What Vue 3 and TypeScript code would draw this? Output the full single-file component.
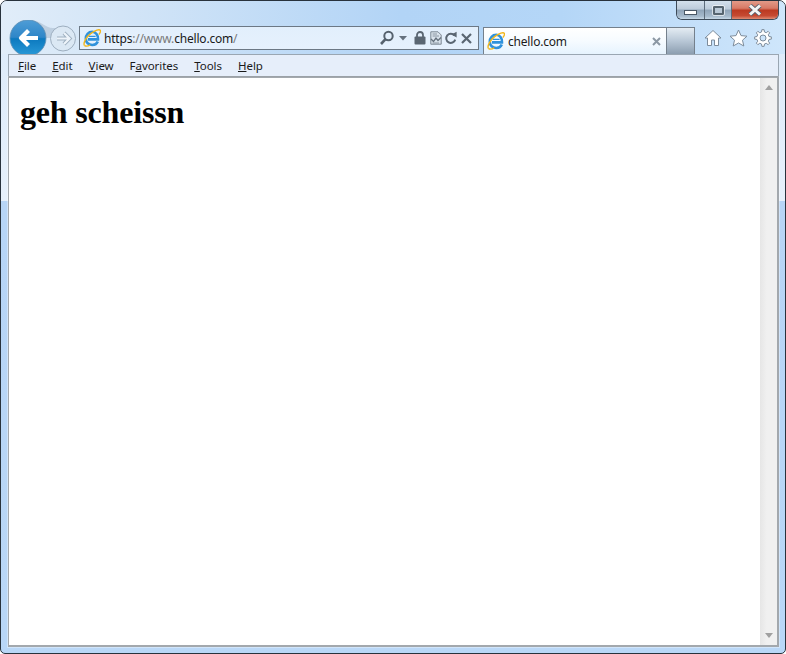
<script setup lang="ts">
interface MenuItem { key: string; rest: string; pre?: string }
const menus: MenuItem[] = [
  { key: 'F', rest: 'ile' },
  { key: 'E', rest: 'dit' },
  { key: 'V', rest: 'iew' },
  { pre: 'F', key: 'a', rest: 'vorites' },
  { key: 'T', rest: 'ools' },
  { key: 'H', rest: 'elp' },
]

function gearPath(cx: number, cy: number, outer: number, inner: number, hole: number, teeth: number): string {
  const pts: string[] = []
  const step = (Math.PI * 2) / teeth
  for (let i = 0; i < teeth; i++) {
    const a = i * step - Math.PI / 2
    const offsets: [number, number][] = [
      [-0.3, inner], [-0.17, outer], [0.17, outer], [0.3, inner],
    ]
    for (const [o, r] of offsets) {
      const t = a + o * step * 1.0
      pts.push(`${(cx + Math.cos(t) * r).toFixed(2)} ${(cy + Math.sin(t) * r).toFixed(2)}`)
    }
  }
  const ring = `M${cx - hole} ${cy} a${hole} ${hole} 0 1 0 ${hole * 2} 0 a${hole} ${hole} 0 1 0 ${-hole * 2} 0 Z`
  return `M${pts.join(' L')} Z ${ring}`
}
const gear = gearPath(9, 9, 8.4, 6.2, 3, 8)
</script>

<template>
  <div class="window">
    <header class="top">
      <div class="caption-row">
        <div class="caption">
          <div class="cap cap-min"><span class="min-glyph"></span></div>
          <div class="cap cap-max"><span class="max-glyph"></span></div>
          <div class="cap cap-close">
            <svg width="18" height="12" viewBox="0 0 18 12"><path d="M4 1.5 L14 10.5 M14 1.5 L4 10.5" stroke="#55606c" stroke-width="4.6" fill="none"/><path d="M4 1.5 L14 10.5 M14 1.5 L4 10.5" stroke="#f4f4f4" stroke-width="3" fill="none"/></svg>
          </div>
        </div>
      </div>
      <div class="nav-row">
        <svg class="nav-buttons" width="70" height="36" viewBox="0 0 70 36">
          <defs>
            <linearGradient id="backg" x1="0" y1="0" x2="0" y2="1">
              <stop offset="0" stop-color="#4f9dd6"/>
              <stop offset="0.48" stop-color="#2e86c8"/>
              <stop offset="0.52" stop-color="#0c79bf"/>
              <stop offset="1" stop-color="#2a9ad8"/>
            </linearGradient>
          </defs>
          <path d="M20 0 C32 0 36 8 44 8 L54 8 L44 18 L30 18 Z" fill="#b4c6d8" opacity="0.75"/>
          <circle cx="54" cy="18.5" r="12.5" fill="#dbe8f4" stroke="#9daebf" stroke-width="1"/>
          <path d="M48 18.5 H60 M55 13 L60.5 18.5 L55 24" stroke="#9fb0c0" stroke-width="4" fill="none"/>
          <path d="M48 18.5 H60 M55 13 L60.5 18.5 L55 24" stroke="#eef4fa" stroke-width="2.2" fill="none"/>
          <circle cx="19" cy="18" r="18" fill="url(#backg)" stroke="#5f8fb4" stroke-width="0.8"/>
          <path d="M29 18 H12 M19.5 10.5 L12 18 L19.5 25.5" stroke="#fff" stroke-width="4.2" fill="none" stroke-linejoin="round"/>
        </svg>
        <div class="address">
          <svg class="ie" width="18" height="18" viewBox="0 0 18 18">
            <path d="M5 10.4 H15 C15.4 6 12.6 2.8 9.3 2.8 C5.4 2.8 2.8 6 2.8 9.6 C2.8 13.6 5.6 16 9.3 16 C12 16 14 14.6 14.8 12.6" stroke="#2f92dc" stroke-width="2.6" fill="none"/>
            <path d="M5.6 7.4 H12.6" stroke="#2f92dc" stroke-width="1.2"/>
            <path d="M1.6 16.6 C-0.4 14.4 3.4 7.6 8 4.4 C12 1.6 16.6 -0.4 17.4 1.6 C17.8 2.8 16.8 4.4 15.8 5.6" stroke="#f2b71c" stroke-width="1.4" fill="none"/>
            <path d="M1.6 16.6 C3.2 17.6 5.6 16.8 7.2 15.8" stroke="#f2b71c" stroke-width="1.4" fill="none"/>
          </svg>
          <div class="url"><span>https</span><span class="dim">://www.</span><span>chello.com</span><span class="dim">/</span></div>
          <div class="addr-icons">
            <svg width="16" height="16" viewBox="0 0 16 16"><circle cx="9.5" cy="6" r="4.2" stroke="#56626e" stroke-width="2" fill="none"/><path d="M6.5 9.2 L2 14" stroke="#56626e" stroke-width="2.6"/></svg>
            <svg class="caret" width="8" height="5" viewBox="0 0 8 5"><path d="M0 0 H8 L4 4.5 Z" fill="#66727e"/></svg>
            <svg class="lock" width="12" height="14" viewBox="0 0 12 14"><path d="M3 6 V4 a3 3 0 0 1 6 0 V6" stroke="#5a6672" stroke-width="1.8" fill="none"/><rect x="0.5" y="5.5" width="11" height="8" rx="1" fill="#5a6672"/></svg>
            <svg class="compat" width="12" height="14" viewBox="0 0 12 14"><path d="M0.8 0.8 H8 L11.2 4 V13.2 H0.8 Z" fill="#d9e3ec" stroke="#7d8994"/><path d="M1 8 L3.5 10.5 L6 7 L8 9.5 L11 6.5" stroke="#66727e" stroke-width="1.3" fill="none"/><path d="M2.6 3 H7 M2.6 5 H9 M2.6 12 H9" stroke="#8a96a2"/></svg>
            <svg class="refresh" width="13" height="14" viewBox="0 0 13 14"><path d="M10.4 4.4 A4.6 4.6 0 1 0 11.2 8.6" stroke="#5a6672" stroke-width="2" fill="none"/><path d="M7.4 3.4 L12.6 0.8 V6.4 Z" fill="#5a6672"/></svg>
            <svg class="stop" width="11" height="11" viewBox="0 0 11 11"><path d="M1 1 L10 10 M10 1 L1 10" stroke="#5a6672" stroke-width="2.2"/></svg>
          </div>
        </div>
        <div class="tab">
          <svg class="ie" width="18" height="18" viewBox="0 0 18 18">
            <path d="M5 10.4 H15 C15.4 6 12.6 2.8 9.3 2.8 C5.4 2.8 2.8 6 2.8 9.6 C2.8 13.6 5.6 16 9.3 16 C12 16 14 14.6 14.8 12.6" stroke="#2f92dc" stroke-width="2.6" fill="none"/>
            <path d="M5.6 7.4 H12.6" stroke="#2f92dc" stroke-width="1.2"/>
            <path d="M1.6 16.6 C-0.4 14.4 3.4 7.6 8 4.4 C12 1.6 16.6 -0.4 17.4 1.6 C17.8 2.8 16.8 4.4 15.8 5.6" stroke="#f2b71c" stroke-width="1.4" fill="none"/>
            <path d="M1.6 16.6 C3.2 17.6 5.6 16.8 7.2 15.8" stroke="#f2b71c" stroke-width="1.4" fill="none"/>
          </svg>
          <span class="tab-title">chello.com</span>
          <svg class="tab-x" width="9" height="9" viewBox="0 0 9 9"><path d="M1 1 L8 8 M8 1 L1 8" stroke="#8c98a4" stroke-width="2"/></svg>
        </div>
        <div class="new-tab"></div>
        <div class="tools">
          <svg width="18" height="18" viewBox="0 0 18 18"><path d="M9 1.5 L17 9 H14.5 V16.5 H10.5 V11 H7.5 V16.5 H3.5 V9 H1 Z" fill="#fff" stroke="#7d8c9b" stroke-linejoin="round"/></svg>
          <svg width="19" height="18" viewBox="0 0 19 18"><path d="M9.5 1 L12 6.6 L18 7.2 L13.5 11.2 L14.8 17 L9.5 14 L4.2 17 L5.5 11.2 L1 7.2 L7 6.6 Z" fill="#fff" stroke="#7d8c9b" stroke-linejoin="round"/></svg>
          <svg class="gear" width="18" height="18" viewBox="0 0 18 18"><path :d="gear" fill="#fff" fill-rule="evenodd" stroke="#7d8c9b" stroke-linejoin="round"/></svg>
        </div>
      </div>
    </header>

    <nav class="menubar">
      <span v-for="m in menus" :key="m.key + m.rest" class="menu-item">{{ m.pre }}<u>{{ m.key }}</u>{{ m.rest }}</span>
    </nav>

    <main class="viewport">
      <div class="page">
        <h1>geh scheissn</h1>
      </div>
      <div class="scrollbar">
        <svg width="8" height="5" viewBox="0 0 8 5"><path d="M4 0 L8 5 H0 Z" fill="#a0a0a0"/></svg>
        <svg width="8" height="5" viewBox="0 0 8 5"><path d="M0 0 H8 L4 5 Z" fill="#a0a0a0"/></svg>
      </div>
    </main>
  </div>
</template>

<style>
html, body { margin: 0; padding: 0; overflow: hidden; background: #fff; }
</style>

<style scoped>
.window {
  box-sizing: border-box;
  width: 786px;
  height: 654px;
  border: 1px solid #28323c;
  border-radius: 7px 7px 5px 5px;
  overflow: hidden;
  display: flex;
  flex-direction: column;
  font-family: "Noto Sans", sans-serif;
  background: linear-gradient(to bottom, #dbeafa 0, #e6f0fb 200px, #b7d5f6 200px, #b9d7f7 100%);
}
.top {
  height: 53px;
  flex: none;
  display: flex;
  flex-direction: column;
  overflow: hidden;
  background: linear-gradient(to right, #e1edf9 0, #d3e5f7 120px, #b2d4f6 400px, #b4d6f7 560px, #cfe6fb 786px);
}
.caption-row {
  height: 19px;
  flex: none;
  display: flex;
  justify-content: flex-end;
  padding-right: 6px;
}
.caption {
  display: flex;
  height: 19px;
  box-sizing: border-box;
  border: 1px solid #3d4a58;
  border-top: 0;
  border-radius: 0 0 6px 6px;
  overflow: hidden;
}
.cap {
  display: flex;
  align-items: center;
  justify-content: center;
  box-sizing: border-box;
  height: 18px;
  background: linear-gradient(to bottom, #d3e0ec 0, #bccbda 45%, #8fa4b8 50%, #a6bacc 85%, #c7d8e6 100%);
}
.cap-min { width: 28px; border-right: 1px solid #5d6c7b; padding-top: 5px; }
.cap-max { width: 27px; border-right: 1px solid #5d6c7b; }
.cap-close {
  width: 46px;
  background: linear-gradient(to bottom, #e39a88 0, #d87a66 40%, #bc3a22 52%, #c64a32 82%, #e08c74 100%);
}
.min-glyph {
  width: 11px;
  height: 3px;
  background: #fff;
  border: 1px solid #4a5866;
}
.max-glyph {
  box-sizing: border-box;
  width: 11px;
  height: 9px;
  background: #b9c8d6;
  border: 2px solid #56646f;
  border-radius: 1px;
  outline: 1px solid rgba(255, 255, 255, 0.6);
}
.nav-row {
  height: 34px;
  flex: none;
  display: flex;
  padding-left: 8px;
}
.nav-buttons { flex: none; }
.address {
  box-sizing: border-box;
  width: 400px;
  height: 24px;
  margin-top: 6px;
  border: 1px solid #6c7885;
  background: linear-gradient(to bottom, #e2effc, #e6f1fd);
  display: flex;
  align-items: center;
  padding-left: 3px;
  flex: none;
}
.url {
  margin-left: 3px;
  font-size: 12px;
  color: #1a1a1a;
  white-space: nowrap;
  letter-spacing: -0.19px;
}
.dim { color: #7a7a7a; }
.addr-icons {
  margin-left: auto;
  display: flex;
  align-items: center;
  padding-right: 6px;
}
.caret { margin-left: 4px; }
.lock { margin-left: 7px; }
.compat { margin-left: 4px; }
.refresh { margin-left: 2px; }
.stop { margin-left: 4px; }
.tab {
  box-sizing: border-box;
  width: 183px;
  height: 27px;
  margin-top: 7px;
  margin-left: 4px;
  border: 1px solid #74808c;
  border-bottom: 0;
  border-right: 0;
  background: linear-gradient(to bottom, #fff 0, #f6fbff 50%, #e6f3fe 100%);
  display: flex;
  align-items: center;
  padding-left: 3px;
  flex: none;
}
.tab-title {
  margin-left: 3px;
  font-size: 12px;
  letter-spacing: -0.2px;
  color: #1a1a1a;
}
.tab-x { margin-left: auto; margin-right: 5px; }
.new-tab {
  box-sizing: border-box;
  width: 29px;
  height: 27px;
  margin-top: 7px;
  border: 1px solid #74808c;
  border-bottom: 0;
  background: linear-gradient(to bottom, #e4ecf3 0, #b8c7d6 50%, #8c9eb0 100%);
  flex: none;
}
.tools {
  display: flex;
  align-items: center;
  gap: 7px;
  height: 24px;
  margin-top: 6px;
  margin-left: 9px;
}
.gear { margin-left: -1px; }
.menubar {
  box-sizing: border-box;
  flex: none;
  height: 23px;
  margin: 0 6px 0 7px;
  border: 1px solid #9aa6b2;
  border-bottom: 1px solid #666f78;
  background: #e6eefa;
  display: flex;
  align-items: center;
  padding-left: 9px;
  gap: 16px;
  font-size: 11.5px;
  letter-spacing: -0.05px;
  color: #1a1a1a;
}
.menu-item { white-space: nowrap; }
.viewport {
  flex: 1;
  min-height: 0;
  margin: 0 6px 6px 7px;
  border: 1px solid #a3a8ad;
  border-bottom-width: 2px;
  border-right-width: 2px;
  display: flex;
  background: #fff;
  box-shadow: 0 0 0 1px rgba(255, 255, 255, 0.35);
}
.page {
  flex: 1;
  min-width: 0;
  padding-left: 11px;
  background: #fff;
}
h1 {
  margin: 16px 0 0;
  font-family: "Liberation Serif", serif;
  font-size: 32px;
  font-weight: bold;
  line-height: 37px;
  letter-spacing: -0.18px;
  color: #000;
}
.scrollbar {
  width: 17px;
  flex: none;
  background: linear-gradient(to right, #e6e6e6, #f0f0f0 40%, #f0f0f0);
  display: flex;
  flex-direction: column;
  align-items: center;
  justify-content: space-between;
  padding: 7px 0;
  box-sizing: border-box;
}
</style>
